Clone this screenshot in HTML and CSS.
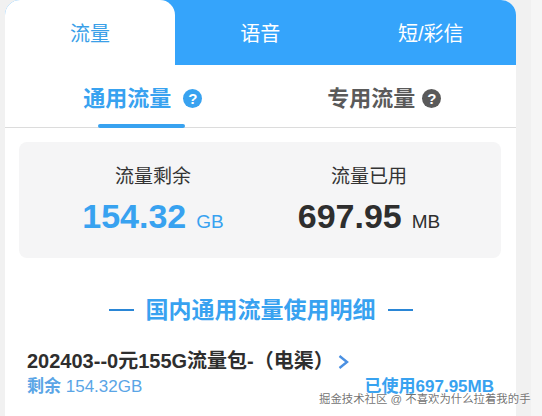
FILE: index.html
```html
<!DOCTYPE html>
<html lang="zh-CN">
<head>
    <meta charset="UTF-8" />
    <meta name="viewport" content="width=device-width, initial-scale=1.0"/>
    <title>流量明细</title>
    <link rel="stylesheet" href="styles.css">
</head>
<body>
    <div class="tarjeta">
        <div class="tabs">
            <div class="tab tab-activa">流量</div>
            <div class="tab">语音</div>
            <div class="tab">短/彩信</div>
        </div>

        <div class="subtabs">
            <div class="subtab subtab-activa">
                <span class="subtab-texto">通用流量</span>
                <span class="ayuda ayuda-azul">?</span>
            </div>
            <div class="subtab subtab-segunda">
                <span class="subtab-texto">专用流量</span>
                <span class="ayuda ayuda-gris">?</span>
            </div>
        </div>

        <div class="resumen">
            <div class="dato">
                <div class="dato-titulo">流量剩余</div>
                <div class="dato-valor azul">154.32<span class="unidad">GB</span></div>
            </div>
            <div class="dato">
                <div class="dato-titulo">流量已用</div>
                <div class="dato-valor">697.95<span class="unidad">MB</span></div>
            </div>
        </div>

        <h2 class="detalle-titulo">国内通用流量使用明细</h2>

        <div class="paquete">
            <div class="paquete-nombre">
                <span>202403--0元155G流量包-（电渠）</span>
                <svg class="flecha" width="11" height="14" viewBox="0 0 11 14">
                    <path d="M1.5 1l7.5 6-7.5 6" fill="none" stroke="#4a90e2" stroke-width="2.4"/>
                </svg>
            </div>
            <div class="paquete-datos">
                <div><b>剩余</b> 154.32GB</div>
                <div class="usado">已使用697.95MB</div>
            </div>
        </div>
    </div>

    <div class="marca">掘金技术社区 @ 不喜欢为什么拉着我的手</div>
</body>
</html>
```

FILE: styles.css
```css
* {
    margin: 0;
    padding: 0;
    box-sizing: border-box;
}

body {
    font-family: "Liberation Sans", "Noto Sans CJK SC", sans-serif;
    background: linear-gradient(90deg, #f1f1f1 531px, #f6f6f6 531px);
    height: 416px;
    overflow: hidden;
    padding-left: 5px;
    position: relative;
}

.tarjeta {
    width: 511px;
    height: 416px;
    background: #ffffff;
    border-radius: 15px 15px 0 0;
    overflow: hidden;
}

.tabs {
    display: flex;
    height: 65px;
    background: #35a4fb;
}

.tab {
    flex: 1;
    text-align: center;
    line-height: 69px;
    font-size: 20px;
    color: #ffffff;
}

.tab-activa {
    flex: none;
    width: 170px;
    background: #ffffff;
    color: #3a9fe8;
    border-radius: 0 15px 0 0;
}

.subtabs {
    display: flex;
    height: 63px;
    border-bottom: 1px solid #dcdcdc;
}

.subtab {
    flex: 1;
    display: flex;
    align-items: center;
    justify-content: center;
    gap: 12px;
    padding: 4px 0 0 17px;
    font-size: 22px;
    font-weight: bold;
    color: #5a5a5a;
    position: relative;
}

.subtab-segunda {
    gap: 7px;
    padding: 4px 11px 0 0;
}

.subtab-texto {
    margin-top: -4px;
}

.subtab-activa {
    color: #38a2f0;
}

.subtab-activa::after {
    content: "";
    position: absolute;
    left: 93px;
    bottom: -1px;
    width: 87px;
    height: 4px;
    border-radius: 2px;
    background: #38a2f0;
}

.ayuda {
    width: 19px;
    height: 19px;
    border-radius: 50%;
    color: #ffffff;
    font-size: 15px;
    line-height: 19px;
    text-align: center;
}

.ayuda-azul {
    background: #38a2f0;
}

.ayuda-gris {
    background: #5a5a5a;
}

.resumen {
    display: flex;
    height: 116px;
    margin: 14px 15px 0 14px;
    padding: 22px 24px 0 26px;
    background: #f5f5f6;
    border-radius: 8px;
}

.dato {
    flex: 1;
    text-align: center;
}

.dato-titulo {
    font-size: 19px;
    line-height: 26px;
    color: #333333;
}

.dato-valor {
    margin-top: 7px;
    font-size: 34px;
    line-height: 38px;
    font-weight: bold;
    color: #2e2e2e;
}

.azul {
    color: #38a2f0;
}

.unidad {
    margin-left: 10px;
    font-size: 19px;
    font-weight: normal;
}

.detalle-titulo {
    display: flex;
    align-items: center;
    justify-content: center;
    gap: 12px;
    margin-top: 38px;
    font-size: 23px;
    line-height: 28px;
    color: #38a2f0;
}

.detalle-titulo::before,
.detalle-titulo::after {
    content: "";
    width: 25px;
    height: 2px;
    background: #2a86d6;
}

.paquete {
    padding: 24px 22px 0;
}

.paquete-nombre {
    display: flex;
    align-items: center;
    gap: 4px;
    font-size: 20px;
    line-height: 26px;
    font-weight: bold;
    color: #2e2e2e;
}

.flecha {
    margin-top: 2px;
}

.paquete-datos {
    display: flex;
    justify-content: space-between;
    margin-top: 1px;
    font-size: 17px;
    line-height: 24px;
    color: #5aa5e6;
}

.usado {
    font-weight: bold;
    color: #38a2f0;
}

.marca {
    position: absolute;
    left: 319px;
    top: 391px;
    font-size: 11.4px;
    line-height: 16px;
    white-space: nowrap;
    color: rgba(90, 90, 90, 0.85);
    text-shadow: 0 0 2px #ffffff;
}
```
